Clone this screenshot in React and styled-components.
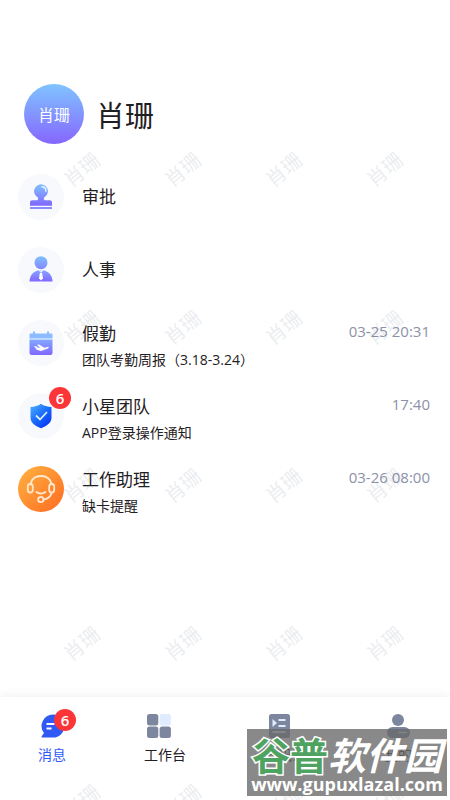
import React, { useState } from 'react'
import styled, { createGlobalStyle } from 'styled-components'

const GlobalStyle = createGlobalStyle`
  * {
    box-sizing: border-box;
  }

  body {
    margin: 0;
    background: #fff;
    color: #1f2023;
    font-family: "Open Sans", "Noto Sans CJK SC", sans-serif;
  }
`

const Page = styled.div`
  position: relative;
  display: flex;
  flex-direction: column;
  min-height: 100vh;
  overflow: hidden;
`

const Header = styled.header`
  display: flex;
  align-items: center;
  gap: 12px;
  padding: 84px 24px 0;
`

const Avatar = styled.div`
  display: flex;
  align-items: center;
  justify-content: center;
  width: 60px;
  height: 60px;
  border-radius: 50%;
  background: linear-gradient(#80c4ff, #8566ff);
  color: #fff;
  font-size: 16px;
`

const Name = styled.h1`
  margin: 0;
  padding-top: 4px;
  font-size: 29px;
  font-weight: 400;
  line-height: 40px;
`

const List = styled.ul`
  flex: 1;
  margin: 0;
  padding: 30px 20px 0 18px;
  list-style: none;
`

const Row = styled.li`
  display: flex;
  gap: 18px;
  min-height: 73px;
`

const RowIcon = styled.div`
  position: relative;
  flex: none;
  width: 46px;
  height: 46px;

  svg {
    display: block;
  }
`

const RowText = styled.div`
  display: flex;
  flex-direction: column;
  flex: 1;
  min-width: 0;
`

const Title = styled.div`
  font-size: 17px;
  line-height: ${({ $single }) => ($single ? 46 : 27)}px;
`

const Preview = styled.div`
  font-size: 14px;
  line-height: 26px;
`

const Time = styled.time`
  color: #8c92a8;
  font-size: 15px;
  line-height: 22px;
`

const Badge = styled.span`
  position: absolute;
  top: ${({ $top }) => $top}px;
  left: ${({ $left }) => $left}px;
  width: 22px;
  height: 22px;
  border-radius: 50%;
  background: #fc3539;
  color: #fff;
  font-size: 15px;
  font-weight: 600;
  line-height: 22px;
  text-align: center;
`

const Nav = styled.nav`
  display: flex;
  justify-content: space-between;
  padding: 17px 38px 34px;
  background: #fff;
  box-shadow: 0 0 10px rgba(0, 0, 0, 0.08);
`

const NavButton = styled.button`
  position: relative;
  display: flex;
  flex-direction: column;
  gap: 6px;
  padding: 0;
  border: 0;
  background: none;
  color: ${({ $active }) => ($active ? '#2f5af5' : '#1f2023')};
  font-family: inherit;
  font-size: 14px;
  line-height: 22px;
  cursor: pointer;

  svg {
    display: block;
    margin-left: 3px;
  }
`

const Watermark = styled.div`
  position: absolute;
  inset: 0;
  display: grid;
  grid-template-columns: repeat(auto-fill, 101px);
  grid-auto-rows: 158px;
  padding: 91px 0 0 31px;
  overflow: hidden;
  pointer-events: none;
`

const Mark = styled.span`
  place-self: center;
  color: rgba(50, 65, 95, 0.09);
  font-size: 20px;
  font-weight: 500;
  line-height: 24px;
  transform: rotate(-40deg);
`

const SiteStamp = styled.div`
  position: absolute;
  right: 3px;
  bottom: 4px;
  width: 200px;
  height: 67px;
  padding-top: 6px;
  background: rgba(104, 104, 104, 0.78);
  color: #fff;
  text-align: center;
  white-space: nowrap;
  pointer-events: none;
`

const StampName = styled.div`
  font-family: "Noto Sans CJK SC", sans-serif;
  font-size: 38px;
  font-weight: 700;
  line-height: 38px;
`

const StampGreen = styled.span`
  color: #4fa361;
  -webkit-text-stroke: 3px #fff;
  paint-order: stroke fill;
`

const StampSlanted = styled.span`
  font-style: italic;
`

const StampUrl = styled.div`
  font-size: 18px;
  font-weight: 700;
  line-height: 22px;
`

const Gradient = ({ id, from = '#7fc0ff', to = '#8167ff' }) => (
  <linearGradient id={id} x1="0" y1="0" x2="0" y2="1">
    <stop offset="0" stopColor={from} />
    <stop offset="1" stopColor={to} />
  </linearGradient>
)

const ApprovalIcon = () => (
  <svg width="46" height="46" viewBox="0 0 46 46">
    <defs><Gradient id="approval" /></defs>
    <circle cx="23" cy="23" r="23" fill="#f7f9fc" />
    <circle cx="23" cy="17.200" r="6.800" fill="url(#approval)" />
    <path
      fill="url(#approval)"
      d="M23 10.500a6.800 6.800 0 0 1 4.500 11.500c-1 1-1.700 1.700-1.700 2.800 0 .9.600 1.500 1.600 1.500h4.400c1.400 0 2.200.8 2.200 2v3.500H12v-3.500c0-1.200.8-2 2.200-2h4.400c1 0 1.600-.6 1.600-1.500 0-1.100-.7-1.800-1.700-2.800A6.800 6.800 0 0 1 23 10.500z"
    />
    <path d="M12 33h22v2H12z" fill="#8b8cff" />
    <path d="M24 12.700a4.500 4.500 0 0 1 4 4.600" fill="none" stroke="#e5f3ff" strokeWidth="1.500" strokeLinecap="round" />
  </svg>
)

const PeopleIcon = () => (
  <svg width="46" height="46" viewBox="0 0 46 46">
    <defs>
      <Gradient id="peopleHead" to="#8387ff" />
      <Gradient id="peopleBody" from="#84a3ff" />
    </defs>
    <circle cx="23" cy="23" r="23" fill="#f7f9fc" />
    <circle cx="23" cy="15.700" r="6.500" fill="url(#peopleHead)" />
    <path d="M19.500 23.500h7c4.500 1.500 7.800 5 8 11h-23c.2-6 3.500-9.500 8-11z" fill="url(#peopleBody)" />
    <path d="M21.800 26h2.400l.7 5.200-1.900 2.200-1.900-2.200z" fill="#fff" />
    <path d="M20.500 23.200h5L23 26z" fill="#e3ecff" />
  </svg>
)

const CalendarIcon = () => (
  <svg width="46" height="46" viewBox="0 0 46 46">
    <defs><Gradient id="calendar" from="#82a9ff" /></defs>
    <circle cx="23" cy="23" r="23" fill="#f7f9fc" />
    <path d="M16 11.500v4M30 11.500v4" stroke="#8bbcff" strokeWidth="2" />
    <path d="M12.500 13.500h21a1 1 0 0 1 1 1v4h-23v-4a1 1 0 0 1 1-1z" fill="#8bbcff" />
    <path d="M11.500 19.500h23V33a2 2 0 0 1-2 2h-19a2 2 0 0 1-2-2z" fill="url(#calendar)" />
    <path d="M16 26l2 .2 1.800 1.400 2.300.3-3.100-3.200 2.100-.1 5.300 3.100 3-.8c1.700-.4 2 .9.500 1.500L23 31l-4.200-1.200z" fill="#fff" />
  </svg>
)

const ShieldIcon = () => (
  <svg width="46" height="46" viewBox="0 0 46 46">
    <defs>
      <linearGradient id="shield" x1="0" y1="0" x2=".8" y2="1">
        <stop offset="0" stopColor="#4fb5ff" />
        <stop offset=".55" stopColor="#1769fa" />
        <stop offset="1" stopColor="#0934f1" />
      </linearGradient>
    </defs>
    <circle cx="23" cy="23" r="23" fill="#f7f9fc" />
    <path d="M23 10.800c3 2.200 6.500 3 10.500 3.300v10.400c0 5-4 8.300-10.500 10.700-6.500-2.400-10.500-5.700-10.500-10.700V14.100c4-.3 7.500-1.100 10.500-3.300z" fill="url(#shield)" />
    <path d="M18 22.500l4 4 7-7.500" fill="none" stroke="#d9edff" strokeWidth="1.800" />
  </svg>
)

const AssistantIcon = () => (
  <svg width="46" height="46" viewBox="0 0 46 46">
    <defs>
      <linearGradient id="assistant" x1="0" y1="0" x2="1" y2="1">
        <stop offset="0" stopColor="#ffb340" />
        <stop offset="1" stopColor="#ff6a22" />
      </linearGradient>
    </defs>
    <circle cx="23" cy="23" r="23" fill="url(#assistant)" />
    <g fill="none" stroke="#ffe8cd" strokeWidth="1.800" strokeLinecap="round">
      <path d="M12.500 18c1.200-5 5.300-8 10.500-8s9.300 3 10.500 8" />
      <rect x="9.800" y="18" width="5" height="8.500" rx="2.500" />
      <rect x="31.200" y="18" width="5" height="8.500" rx="2.500" />
      <path d="M18.500 26c2.500 2 6.500 2 9 0" />
      <path d="M33.500 27c-.8 3.300-3.500 5.700-7.500 6.500" />
      <circle cx="22.800" cy="33.500" r="2.700" />
    </g>
  </svg>
)

const MessageIcon = () => (
  <svg width="24" height="24" viewBox="0 0 24 24">
    <path d="M12 .5a11.500 11.500 0 1 1 0 23H1.300c-.8 0-1-.7-.6-1.200L3 19A11.500 11.500 0 0 1 12 .5z" fill="#2f5af5" />
    <path d="M5.500 10h8M5.500 14.500h5" stroke="#fff" strokeWidth="2" />
  </svg>
)

const WorkbenchIcon = () => (
  <svg width="24" height="24" viewBox="0 0 24 24">
    <rect width="11.300" height="11.500" rx="2.500" fill="#7c879f" />
    <rect x="12.600" width="11.300" height="11.500" rx="2.500" fill="#dfebff" />
    <rect y="12.500" width="11.300" height="11.500" rx="2.500" fill="#7c879f" />
    <rect x="12.600" y="12.500" width="11.300" height="11.500" rx="2.500" fill="#7c879f" />
  </svg>
)

const ContactsIcon = () => (
  <svg width="24" height="24" viewBox="0 0 24 24">
    <rect x="2" width="21" height="24" rx="2.500" fill="#7c879f" />
    <path d="M5.500 5l4.500 4-4.500 4zM11.500 5h7v2h-7zM11.500 11h7v2h-7zM5.500 17h13v2h-13z" fill="#dfebff" />
  </svg>
)

const ProfileIcon = () => (
  <svg width="24" height="24" viewBox="0 0 24 24">
    <circle cx="11" cy="6" r="6" fill="#7c879f" />
    <rect y="13" width="23" height="11" rx="5.500" fill="#7c879f" />
    <path d="M12 18.500h7" stroke="#dfebff" strokeWidth="1.500" strokeLinecap="round" />
  </svg>
)

const messages = [
  { title: '审批', icon: ApprovalIcon },
  { title: '人事', icon: PeopleIcon },
  { title: '假勤', icon: CalendarIcon, preview: '团队考勤周报（3.18-3.24）', time: '03-25 20:31' },
  { title: '小星团队', icon: ShieldIcon, preview: 'APP登录操作通知', time: '17:40', unread: 6 },
  { title: '工作助理', icon: AssistantIcon, preview: '缺卡提醒', time: '03-26 08:00' }
]

const tabs = [
  { label: '消息', icon: MessageIcon, unread: 6 },
  { label: '工作台', icon: WorkbenchIcon },
  { label: '通讯录', icon: ContactsIcon },
  { label: '我的', icon: ProfileIcon }
]

const MessageRow = ({ title, icon: Icon, preview, time, unread }) => (
  <Row>
    <RowIcon>
      <Icon />
      {unread && <Badge $top={-6} $left={31}>{unread}</Badge>}
    </RowIcon>
    <RowText>
      <Title $single={!preview}>{title}</Title>
      {preview && <Preview>{preview}</Preview>}
    </RowText>
    {time && <Time>{time}</Time>}
  </Row>
)

const App = () => {
  const [tab, setTab] = useState('消息')

  return (
    <>
      <GlobalStyle />
      <Page>
        <Header>
          <Avatar>肖珊</Avatar>
          <Name>肖珊</Name>
        </Header>
        <List>
          {messages.map(message => <MessageRow key={message.title} {...message} />)}
        </List>
        <Nav>
          {tabs.map(({ label, icon: Icon, unread }) => (
            <NavButton key={label} type="button" $active={tab === label} onClick={() => setTab(label)}>
              <Icon />
              {label}
              {unread && <Badge $top={-5} $left={16}>{unread}</Badge>}
            </NavButton>
          ))}
        </Nav>
        <Watermark aria-hidden="true">
          {Array.from({ length: 20 }, (_, i) => <Mark key={i}>肖珊</Mark>)}
        </Watermark>
        <SiteStamp>
          <StampName>
            <StampGreen>谷普</StampGreen>
            <StampSlanted>软件园</StampSlanted>
          </StampName>
          <StampUrl>www.gupuxlazal.com</StampUrl>
        </SiteStamp>
      </Page>
    </>
  )
}

export default App
